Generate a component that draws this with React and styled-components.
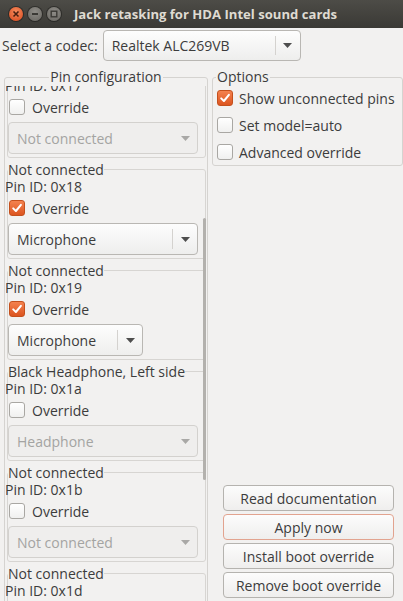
import React, { useLayoutEffect, useRef } from "react";
import styled, { createGlobalStyle } from "styled-components";

const GlobalStyle = createGlobalStyle`
  html, body {
    margin: 0;
    padding: 0;
    background: #f2f1f0;
  }
  body {
    font-family: "Open Sans", "Noto Sans", sans-serif;
    font-size: 14px;
    color: #3c3c3c;
  }
`;

const Window = styled.div`
  width: 403px;
  height: 601px;
  overflow: hidden;
  display: flex;
  flex-direction: column;
  background: #f2f1f0;
`;

const TitleBar = styled.div`
  height: 28px;
  flex: none;
  display: flex;
  align-items: center;
  padding-left: 9px;
  background: linear-gradient(#4d4c47, #3a3935);
  color: #dfdbd2;
  font-weight: bold;
  font-size: 13.1px;
`;

const WinButtons = styled.div`
  display: flex;
  gap: 5px;
  margin-right: 13px;
`;

const WinButton = styled.span`
  width: 14px;
  height: 14px;
  border-radius: 50%;
  display: flex;
  align-items: center;
  justify-content: center;
  background: ${(p) =>
    p.$close
      ? "radial-gradient(circle at 50% 35%, #f68c5e, #d8461a)"
      : "radial-gradient(circle at 50% 35%, #8e8c87, #676560)"};
  box-shadow: 0 0 0 1px rgba(0, 0, 0, 0.35);
`;

const CodecRow = styled.div`
  display: flex;
  align-items: center;
  gap: 5px;
  padding: 2px 0 0 2px;
  flex: none;
`;

const Combo = styled.div`
  box-sizing: border-box;
  height: ${(p) => p.$h || 32}px;
  width: ${(p) => p.$w}px;
  display: flex;
  align-items: center;
  border: 1px solid ${(p) => (p.$disabled ? "#d3d1ce" : "#b9b7b3")};
  border-radius: 4px;
  background: ${(p) =>
    p.$disabled ? "#efeeed" : "linear-gradient(#fdfdfd, #eeeeed)"};
  color: ${(p) => (p.$disabled ? "#a4a4a2" : "#3c3c3c")};
  margin-top: ${(p) => p.$mt || 0}px;
`;

const ComboText = styled.span`
  flex: 1;
  padding-left: 8px;
  white-space: nowrap;
`;

const ArrowBox = styled.span`
  width: 24px;
  align-self: stretch;
  margin: 5px 0;
  display: flex;
  align-items: center;
  justify-content: center;
  border-left: 1px solid ${(p) => (p.$disabled ? "transparent" : "#d4d2cf")};
`;

const Main = styled.div`
  flex: 1;
  min-height: 0;
  display: flex;
  gap: 4px;
  padding: 7px 0 3px 4px;
`;

const Frame = styled.fieldset`
  margin: 0;
  padding: 0 3px 1px;
  border: 1px solid #d5d3d0;
  border-radius: 3px;
  min-width: 0;
`;

const FrameLegend = styled.legend`
  padding: 0 1px;
  line-height: 18px;
  margin: ${(p) => (p.$center ? "0 auto" : "0")};
`;

const PinFrameOuter = styled(Frame)`
  width: 204px;
  box-sizing: border-box;
  padding: 0 1px;
  margin-bottom: -8px;
  display: flex;
  flex-direction: column;
  position: relative;
`;

const Viewport = styled.div`
  flex: 1;
  min-height: 0;
  overflow: hidden;
  position: relative;
`;

const ScrollThumb = styled.div`
  position: absolute;
  right: 1px;
  top: 132px;
  width: 3px;
  height: 262px;
  border-radius: 2px;
  background: #b3b1ad;
`;

const PinFrame = styled.fieldset`
  margin: 0 0 3px 1px;
  padding: 0 0 3px 0;
  border: 1px solid #d7d5d2;
  border-radius: 3px;
  min-width: 0;
`;

const PinLegend = styled.legend`
  padding: 0;
  line-height: 17px;
  white-space: nowrap;
`;

const PinId = styled.div`
  line-height: 18px;
  margin-left: -3px;
`;

const CheckRow = styled.label`
  height: 24px;
  display: flex;
  align-items: center;
  gap: ${(p) => p.$gap || 7}px;
  padding-left: ${(p) => p.$pl || 1}px;
  margin-bottom: ${(p) => p.$mb || 0}px;
  white-space: nowrap;
`;

const Box = styled.span`
  box-sizing: border-box;
  width: 16px;
  height: 16px;
  border-radius: 3px;
  flex: none;
  display: flex;
  align-items: center;
  justify-content: center;
  border: 1px solid ${(p) => (p.$checked ? "#c4501d" : "#a9a7a3")};
  background: ${(p) =>
    p.$checked
      ? "linear-gradient(#f4824f, #dc5520)"
      : "linear-gradient(#ffffff, #f0f0ef)"};
`;

const RightColumn = styled.div`
  width: 191px;
  display: flex;
  flex-direction: column;
  justify-content: space-between;
`;

const OptionsBody = styled.div`
  padding-top: 0;
`;

const ButtonStack = styled.div`
  display: flex;
  flex-direction: column;
  gap: 3px;
  align-self: flex-end;
  margin-right: 9px;
`;

const Button = styled.button`
  box-sizing: border-box;
  width: 171px;
  height: 26px;
  padding: 0;
  font: inherit;
  color: #3c3c3c;
  border: 1px solid ${(p) => (p.$default ? "#e2a38f" : "#b5b3af")};
  border-radius: 4px;
  background: linear-gradient(#fcfcfc, #efeeed);
`;

function Arrow({ disabled }) {
  return (
    <svg width="9" height="5" viewBox="0 0 9 5">
      <path d="M0 0 L9 0 L4.5 5 Z" fill={disabled ? "#a9a8a6" : "#4e4e4e"} />
    </svg>
  );
}

function Dropdown({ value, width, disabled, height, mt }) {
  return (
    <Combo $w={width} $disabled={disabled} $h={height} $mt={mt}>
      <ComboText>{value}</ComboText>
      <ArrowBox $disabled={disabled}>
        <Arrow disabled={disabled} />
      </ArrowBox>
    </Combo>
  );
}

function Check({ checked, children, gap, pl, mb }) {
  return (
    <CheckRow $gap={gap} $pl={pl} $mb={mb}>
      <Box $checked={checked}>
        {checked && (
          <svg width="12" height="12" viewBox="0 0 12 12">
            <path
              d="M2.2 6.4 L4.9 9 L9.9 2.8"
              fill="none"
              stroke="#fff"
              strokeWidth="2"
              strokeLinecap="round"
              strokeLinejoin="round"
            />
          </svg>
        )}
      </Box>
      <span>{children}</span>
    </CheckRow>
  );
}

const pins = [
  { name: "Not connected", id: "0x17", override: false, value: "Not connected", width: 190 },
  { name: "Not connected", id: "0x18", override: true, value: "Microphone", width: 190 },
  { name: "Not connected", id: "0x19", override: true, value: "Microphone", width: 135 },
  { name: "Black Headphone, Left side", id: "0x1a", override: false, value: "Headphone", width: 190 },
  { name: "Not connected", id: "0x1b", override: false, value: "Not connected", width: 190 },
  { name: "Not connected", id: "0x1d", override: false, value: "Not connected", width: 190 },
];

export default function App() {
  const viewRef = useRef(null);
  const firstRef = useRef(null);

  // the pin list is scrolled a little, as in the screenshot
  useLayoutEffect(() => {
    if (viewRef.current && firstRef.current) {
      viewRef.current.scrollTop = firstRef.current.offsetTop + 26;
    }
  }, []);

  return (
    <>
      <GlobalStyle />
      <Window>
        <TitleBar>
          <WinButtons>
            <WinButton $close>
              <svg width="8" height="8" viewBox="0 0 8 8">
                <path d="M1.5 1.5 L6.5 6.5 M6.5 1.5 L1.5 6.5" stroke="#4a1f10" strokeWidth="1.6" />
              </svg>
            </WinButton>
            <WinButton>
              <svg width="8" height="8" viewBox="0 0 8 8">
                <path d="M1 4 L7 4" stroke="#3a3935" strokeWidth="2" />
              </svg>
            </WinButton>
            <WinButton>
              <svg width="8" height="8" viewBox="0 0 8 8">
                <rect x="1.2" y="1.2" width="5.6" height="5.6" fill="none" stroke="#3a3935" strokeWidth="1.4" />
              </svg>
            </WinButton>
          </WinButtons>
          Jack retasking for HDA Intel sound cards
        </TitleBar>

        <CodecRow>
          <span>Select a codec:</span>
          <Dropdown value="Realtek ALC269VB" width={198} height={31} />
        </CodecRow>

        <Main>
          <PinFrameOuter>
            <FrameLegend $center>Pin configuration</FrameLegend>
            <Viewport ref={viewRef}>
              {pins.map((pin, i) => (
                <PinFrame key={pin.id} ref={i === 0 ? firstRef : undefined}>
                  <PinLegend>{pin.name}</PinLegend>
                  <PinId>Pin ID: {pin.id}</PinId>
                  <Check checked={pin.override}>Override</Check>
                  <Dropdown
                    value={pin.value}
                    width={pin.width}
                    disabled={!pin.override}
                    mt={3}
                  />
                </PinFrame>
              ))}
            </Viewport>
            <ScrollThumb />
          </PinFrameOuter>

          <RightColumn>
            <Frame>
              <FrameLegend>Options</FrameLegend>
              <OptionsBody>
                <Check checked gap={6} pl={0} mb={3}>Show unconnected pins</Check>
                <Check gap={6} pl={0} mb={3}>Set model=auto</Check>
                <Check gap={6} pl={0}>Advanced override</Check>
              </OptionsBody>
            </Frame>
            <ButtonStack>
              <Button>Read documentation</Button>
              <Button $default>Apply now</Button>
              <Button>Install boot override</Button>
              <Button>Remove boot override</Button>
            </ButtonStack>
          </RightColumn>
        </Main>
      </Window>
    </>
  );
}
